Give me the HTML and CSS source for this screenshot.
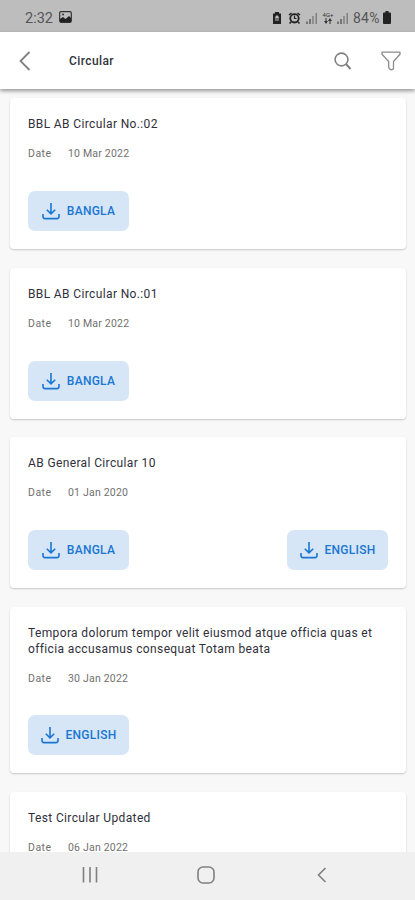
FILE: index.html
```html
<!DOCTYPE html>
<html lang="en">
<head>
<meta charset="utf-8">
<title>Circular</title>
<link rel="stylesheet" href="styles.css">
</head>
<body>
<svg width="0" height="0" class="defs"><defs>
<symbol id="download" viewBox="0 0 18 18"><path d="M9 1v10.5M4.8 7.7 9 11.800l4.200-4.100M1 12v2.600q0 2 2 2h12q2 0 2-2V12" fill="none" stroke="currentColor" stroke-width="1.600"/></symbol>
<symbol id="signal" viewBox="0 0 12 12"><path d="M1 9.500V12M4 7v5" stroke="#555" stroke-width="1.400"/><path d="M7 4v8M10.200 1v11" stroke="#777" stroke-width="1.300"/></symbol>
</defs></svg>
<div class="screen">
  <div class="status">
    <span class="time">2:32</span>
    <svg class="photo" width="13" height="12" viewBox="0 0 13 12"><rect x=".7" y=".7" width="11.600" height="10.600" rx="1.200" fill="none" stroke="#333" stroke-width="1.200"/><path d="M1 11V8l3-2 2.500 2L10 5l2 2v4z" fill="#222"/><circle cx="4" cy="3.500" r="1" fill="#333"/></svg>
    <div class="indicators">
      <svg width="10" height="12" viewBox="0 0 10 12"><path d="M3 0h4v1.500h2V12H1V1.500h2z" fill="#222"/><path d="M5 3 2.500 5.500h1V9h3V5.500h1z" fill="#bdbdbd"/><path d="M4.500 6h1v3h-1z" fill="#222"/></svg>
      <svg class="alarm" width="13" height="12" viewBox="0 0 13 12"><path d="M1 3 3.500 1M12 3 9.500 1M3 10l-1.500 1.500M10 10l1.500 1.500" stroke="#222" stroke-width="1.500"/><circle cx="6.500" cy="6.300" r="4.200" fill="none" stroke="#222" stroke-width="1.800"/><path d="M6.500 3.500v3h2" fill="none" stroke="#222" stroke-width="1.200"/></svg>
      <svg class="sig" width="12" height="12"><use href="#signal"/></svg>
      <div class="network"><span>4G+</span><svg width="8" height="6" viewBox="0 0 8 6"><path d="M2 0v4M6 2v4" stroke="#333"/><path d="M0 3h4L2 6zM4 3h4L6 0z" fill="#333"/></svg></div>
      <svg class="sig two" width="12" height="12"><use href="#signal"/></svg>
      <span class="percent">84%</span>
      <svg class="battery" width="8" height="13" viewBox="0 0 8 13"><path d="M2.500 0h3v1.500H7q1 0 1 1V12q0 1-1 1H1q-1 0-1-1V2.500q0-1 1-1h1.500z" fill="#222"/></svg>
    </div>
  </div>
  <header class="bar">
    <svg class="back" width="12" height="20" viewBox="0 0 12 20"><path d="M10.500 1 1.500 10l9 9" fill="none" stroke="#808080" stroke-width="1.800"/></svg>
    <h1>Circular</h1>
    <svg class="search" width="18" height="18" viewBox="0 0 18 18"><circle cx="7.500" cy="7.500" r="6.400" fill="none" stroke="#808080" stroke-width="1.600"/><path d="m12 12 4.500 5" stroke="#808080" stroke-width="1.900"/></svg>
    <svg class="filter" width="20" height="20" viewBox="0 0 20 20"><path d="M1 1.200h18v2L12.500 10.500V17q0 1.500-2.500 1.800Q8 18 7.700 16.500v-6L1 3.200z" fill="none" stroke="#8c8c8c" stroke-width="1.300" stroke-linejoin="round"/></svg>
  </header>
  <main class="list">
    <article class="card"><h2>BBL AB Circular No.:02</h2><p><span class="label">Date</span><span>10 Mar 2022</span></p><div class="actions"><button><svg width="18" height="18"><use href="#download"/></svg><span>BANGLA</span></button></div></article>
    <article class="card"><h2>BBL AB Circular No.:01</h2><p><span class="label">Date</span><span>10 Mar 2022</span></p><div class="actions"><button><svg width="18" height="18"><use href="#download"/></svg><span>BANGLA</span></button></div></article>
    <article class="card"><h2>AB General Circular 10</h2><p><span class="label">Date</span><span>01 Jan 2020</span></p><div class="actions"><button><svg width="18" height="18"><use href="#download"/></svg><span>BANGLA</span></button><button><svg width="18" height="18"><use href="#download"/></svg><span>ENGLISH</span></button></div></article>
    <article class="card tall"><h2>Tempora dolorum tempor velit eiusmod atque officia quas et officia accusamus consequat Totam beata</h2><p><span class="label">Date</span><span>30 Jan 2022</span></p><div class="actions"><button><svg width="18" height="18"><use href="#download"/></svg><span>ENGLISH</span></button></div></article>
    <article class="card"><h2>Test Circular Updated</h2><p><span class="label">Date</span><span>06 Jan 2022</span></p></article>
  </main>
  <nav class="nav">
    <svg width="16" height="16" viewBox="0 0 16 16"><path d="M1.500 0v15.500M8 0v15.500M14.500 0v15.500" stroke="#808080" stroke-width="1.600"/></svg>
    <svg class="home" width="18" height="18" viewBox="0 0 18 18"><rect x="1" y="1" width="16" height="16" rx="5" fill="none" stroke="#808080" stroke-width="1.600"/></svg>
    <svg class="nav-back" width="10" height="16" viewBox="0 0 10 16"><path d="M8.500 1 1.500 8l7 7" fill="none" stroke="#808080" stroke-width="1.600"/></svg>
  </nav>
</div>
</body>
</html>
```
FILE: styles.css
```css
* { box-sizing: border-box; margin: 0; padding: 0; }
body { font-family: Roboto, sans-serif; background: #f8f8f8; overflow: hidden; }
.defs { display: block; height: 0; }
svg { flex: none; }
.screen { width: 415px; height: 900px; display: flex; flex-direction: column; }
.status { height: 32px; flex: none; background: #bdbdbd; display: flex; align-items: center; padding: 3px 24px 0 25px; color: #555; }
.time { font-size: 14.500px; width: 29px; padding-top: 1px; white-space: nowrap; }
.photo { margin-left: 5px; margin-bottom: 2px; }
.indicators { display: flex; align-items: center; margin-left: auto; }
.alarm { margin-left: 6px; }
.sig { margin-left: 5px; }
.two { margin-left: 3px; }
.network { width: 12px; margin-left: 4px; display: flex; flex-direction: column; align-items: center; font-size: 6px; line-height: 6px; color: #333; }
.percent { font-size: 14px; line-height: 16px; margin-left: 4px; width: 29px; white-space: nowrap; letter-spacing: .2px; }
.battery { margin-left: 1px; }
.bar { height: 57px; flex: none; background: #fff; display: flex; align-items: center; padding: 0 14px 0 19px; box-shadow: 0 2px 4px rgba(0,0,0,.4); z-index: 1; }
h1 { font-size: 12px; font-weight: 500; color: #33333d; margin-left: 38px; letter-spacing: .4px; }
.search { margin-left: auto; }
.filter { margin-left: 29px; }
.list { flex: 1; min-height: 0; overflow: hidden; padding: 9px 9px 0 10px; display: flex; flex-direction: column; gap: 18.500px; }
.card { flex: none; background: #fff; border-radius: 4px; padding: 18px 18px 0; height: 151px; box-shadow: 0 1px 2px rgba(0,0,0,.2); }
.tall { height: 166.500px; }
h2 { font-size: 12px; line-height: 16px; font-weight: 400; color: #30303a; letter-spacing: .37px; }
.card p { font-size: 10.500px; line-height: 14px; margin-top: 15px; color: #707070; display: flex; letter-spacing: .2px; }
.label { width: 40px; letter-spacing: .5px; }
.actions { display: flex; justify-content: space-between; margin-top: 30px; }
.tall .actions { margin-top: 29.500px; }
button { width: 101px; height: 40px; border: 0; border-radius: 7px; background: #d6e6f6; color: #1976d2; display: flex; align-items: center; justify-content: center; gap: 7px; font: 500 12px Roboto, sans-serif; letter-spacing: .25px; }
.nav { height: 48px; flex: none; background: #f0f0f0; display: flex; align-items: center; padding: 0 0 2px 82px; z-index: 1; }
.home { margin-left: 99px; }
.nav-back { margin-left: 102px; }
```
